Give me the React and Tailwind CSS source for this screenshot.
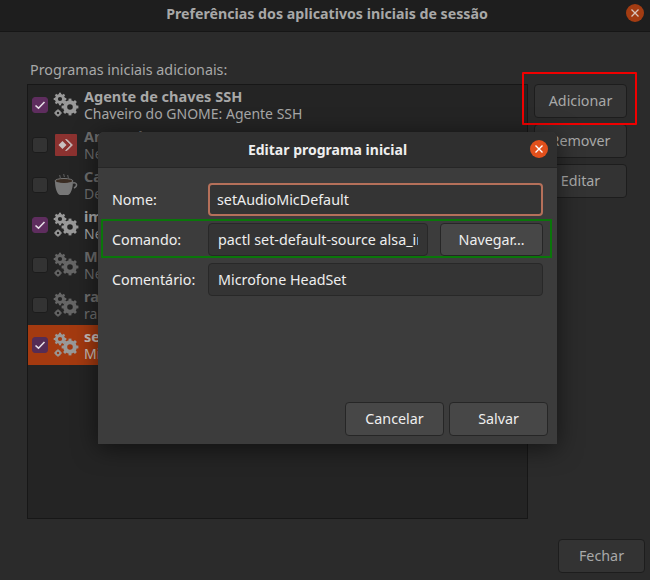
import React from 'react';

const font = { fontFamily: '"Noto Sans", sans-serif' };

const rows = [
  { title: 'Agente de chaves SSH', desc: 'Chaveiro do GNOME: Agente SSH', checked: true, icon: 'gears' },
  { title: 'AnyDesk', desc: 'Nenhuma descrição', dim: true, icon: 'anydesk' },
  { title: 'Caffeine', desc: 'Desativar o protetor de tela', dim: true, icon: 'cup' },
  { title: 'im-launch', desc: 'Nenhuma descrição', checked: true, icon: 'gears' },
  { title: 'Mic', desc: 'Nenhuma descrição', dim: true, icon: 'gears' },
  { title: 'ra', desc: 'ra', dim: true, icon: 'gears' },
  { title: 'setAudioMicDefault', desc: 'Microfone HeadSet', checked: true, selected: true, icon: 'gears' },
];

// small gear: ring plus teeth
const Gear = ({ cx, cy, r, teeth = 8, color }) => (
  <g stroke={color} fill="none">
    <circle cx={cx} cy={cy} r={r * 0.6} strokeWidth={r * 0.5} />
    {Array.from({ length: teeth }).map((_, i) => {
      const a = (i / teeth) * Math.PI * 2;
      return (
        <line
          key={i}
          x1={cx + Math.cos(a) * r * 0.7}
          y1={cy + Math.sin(a) * r * 0.7}
          x2={cx + Math.cos(a) * r * 1.05}
          y2={cy + Math.sin(a) * r * 1.05}
          strokeWidth={r * 0.36}
        />
      );
    })}
  </g>
);

const GearsIcon = ({ dim }) => {
  const c = dim ? '#666666' : '#999999';
  return (
    <svg width="26" height="26" viewBox="0 0 26 26" className="shrink-0">
      <Gear cx={7} cy={7} r={6} color={c} />
      <Gear cx={17} cy={15} r={8} color={c} />
      <Gear cx={5} cy={21} r={3.5} teeth={4} color={c} />
    </svg>
  );
};

const AnyDeskIcon = () => (
  <svg width="26" height="26" viewBox="0 0 26 26" className="shrink-0">
    <rect x="2" y="2" width="22" height="22" rx="1" fill="#8c3230" />
    <path d="M9.5 9l4 4-4 4-4-4z" fill="#c9c0c0" />
    <path d="M14 7.5l5.5 5.5-5.5 5.5h-1.5l5.5-5.5-5.5-5.5z" fill="#c9c0c0" strokeWidth="0.6" stroke="#c9c0c0" />
  </svg>
);

const CupIcon = () => (
  <svg width="26" height="26" viewBox="0 0 26 26" className="shrink-0">
    <path d="M7 3c-1 1 1 2 0 3M11 2c-1 1 1 2 0 3M15 3c-1 1 1 2 0 3" stroke="#6a6a6a" fill="none" />
    <ellipse cx="11" cy="9" rx="9" ry="2.5" fill="#3a2c22" stroke="#777" />
    <path d="M2 9c0 7 2 13 5 14h8c3-1 5-7 5-14-3 3-15 3-18 0z" fill="#777" />
    <path d="M20 11c4-1 5 3 1 5" stroke="#777" fill="none" strokeWidth="1.5" />
  </svg>
);

const Check = ({ checked, selected }) => (
  <div
    className={`w-4 h-4 rounded-[3px] border shrink-0 flex items-center justify-center ${
      checked ? (selected ? 'bg-[#552c55] border-[#552c55]' : 'bg-[#5e2d5e] border-[#5e2d5e]') : 'bg-[#333333] border-[#1c1c1c]'
    }`}
  >
    {checked && (
      <svg width="12" height="12" viewBox="0 0 12 12">
        <path d="M1.5 6.5L4.5 9.2L10.5 3" stroke="#e6dfe6" strokeWidth="1.6" fill="none" />
      </svg>
    )}
  </div>
);

const Row = ({ row }) => {
  const titleColor = row.selected ? 'text-[#c9c0bc]' : row.dim ? 'text-[#6e6e6e]' : 'text-[#a8a8a8]';
  const descColor = row.selected ? 'text-[#c9c0bc]' : row.dim ? 'text-[#6e6e6e]' : 'text-[#a8a8a8]';
  return (
    <div className={`h-10 pl-1 pr-2 flex items-center ${row.selected ? 'bg-[#a43a10]' : ''}`}>
      <Check checked={row.checked} selected={row.selected} />
      <div className="mx-[5px] flex">
        {row.icon === 'gears' && <GearsIcon dim={row.dim} />}
        {row.icon === 'anydesk' && <AnyDeskIcon />}
        {row.icon === 'cup' && <CupIcon />}
      </div>
      <div className="leading-[17px] whitespace-nowrap">
        <div className={`font-bold text-[14.5px] ${titleColor}`}>{row.title}</div>
        <div className={`text-[14px] ${descColor}`}>{row.desc}</div>
      </div>
    </div>
  );
};

const SideButton = ({ children, className = '' }) => (
  <div className={`h-[34px] border border-[#1d1d1d] rounded-[4px] bg-[#333333] text-[#a8a8a8] text-[14.3px] flex items-center justify-center ${className}`}>
    {children}
  </div>
);

const DialogButton = ({ children, className = '' }) => (
  <div className={`h-[34px] border border-[#262626] rounded-[4px] bg-[#474747] text-[#eeeeee] text-[14.3px] flex items-center justify-center ${className}`}>
    {children}
  </div>
);

const Field = ({ label, children }) => (
  <div className="flex items-center h-[33px]">
    <div className="w-[96px] shrink-0 text-[14.3px] text-[#eeeeee]">{label}</div>
    {children}
  </div>
);

const App = () => {
  return (
    <div className="relative w-[650px] h-[580px] bg-[#2b2b2b] overflow-hidden flex flex-col" style={font}>
      {/* Main window header */}
      <div className="h-[32px] shrink-0 pb-[4px] bg-[#1e1e1e] border-b border-[#161616] flex items-center justify-center relative">
        <span className="font-bold text-[14.2px] text-[#a8a8a8] ml-[4px]">Preferências dos aplicativos iniciais de sessão</span>
        <div className="absolute left-[626px] top-[4px] w-[18px] h-[18px] rounded-full bg-[#a33c12] flex items-center justify-center">
          <svg width="10" height="10" viewBox="0 0 10 10">
            <path d="M1.5 1.5l7 7M8.5 1.5l-7 7" stroke="#d9c6bd" strokeWidth="1.3" />
          </svg>
        </div>
      </div>

      <div className="flex-1 flex flex-col pl-[27px] pr-[5px] pb-[7px]">
        <div className="text-[14.3px] text-[#a8a8a8] mt-[27px] ml-[3px] h-[25px] leading-[22px]">Programas iniciais adicionais:</div>
        <div className="flex flex-1">
          <div className="w-[501px] h-[435px] bg-[#242424] border border-[#171717]">
            {rows.map((row) => (
              <Row key={row.title} row={row} />
            ))}
          </div>
          <div className="ml-[6px] w-[93px] flex flex-col gap-[6px]">
            <SideButton>Adicionar</SideButton>
            <SideButton>Remover</SideButton>
            <SideButton>Editar</SideButton>
          </div>
        </div>
        <div className="flex justify-end">
          <SideButton className="w-[87px]">Fechar</SideButton>
        </div>
      </div>

      {/* Annotation around Adicionar */}
      <div className="absolute left-[522px] top-[72px] w-[115px] h-[53px] border-2 border-[#f00000] rounded-[1px]" />

      {/* Edit dialog */}
      <div className="absolute left-[98px] top-[132px] w-[459px] h-[312px] bg-[#3c3c3c] rounded-t-[6px] flex flex-col shadow-[0_4px_24px_rgba(0,0,0,0.55)]">
        <div className="h-[36px] shrink-0 bg-[#2f2f2f] border-b border-[#262626] rounded-t-[6px] flex items-center justify-center relative">
          <span className="font-bold text-[14px] text-[#eeeeee]">Editar programa inicial</span>
          <div className="absolute left-[432px] top-[8px] w-[18px] h-[18px] rounded-full bg-[#e2501c] flex items-center justify-center">
            <svg width="10" height="10" viewBox="0 0 10 10">
              <path d="M1.5 1.5l7 7M8.5 1.5l-7 7" stroke="#ffffff" strokeWidth="1.4" />
            </svg>
          </div>
        </div>
        <div className="flex-1 flex flex-col pl-[14px] pr-[14px] pt-[15px] pb-[8px]">
          <div className="flex flex-col gap-[7px]">
            <Field label="Nome:">
              <div className="flex-1 h-[33px] border-2 border-[#b5705a] rounded-[4px] bg-[#343434] pl-[7px] flex items-center text-[14.3px] text-[#eeeeee]">
                setAudioMicDefault
              </div>
            </Field>
            <Field label="Comando:">
              <div className="w-[220px] h-[33px] border border-[#282828] rounded-[4px] bg-[#343434] px-[9px] flex items-center text-[14.3px] text-[#eeeeee]">
                <div className="overflow-hidden whitespace-nowrap w-full">pactl set-default-source alsa_input.usb</div>
              </div>
              <DialogButton className="ml-[12px] w-[103px] !h-[33px]">Navegar…</DialogButton>
            </Field>
            <Field label="Comentário:">
              <div className="flex-1 h-[33px] border border-[#282828] rounded-[4px] bg-[#343434] pl-[9px] flex items-center text-[14.3px] text-[#eeeeee]">
                Microfone HeadSet
              </div>
            </Field>
          </div>
          <div className="mt-auto flex justify-end gap-[5px] -mr-[5px]">
            <DialogButton className="w-[99px]">Cancelar</DialogButton>
            <DialogButton className="w-[99px]">Salvar</DialogButton>
          </div>
        </div>
      </div>

      {/* Annotation around the command row */}
      <div className="absolute left-[101px] top-[219px] w-[451px] h-[39px] border-2 border-[#0a760a]" />
    </div>
  );
};

export default App;
